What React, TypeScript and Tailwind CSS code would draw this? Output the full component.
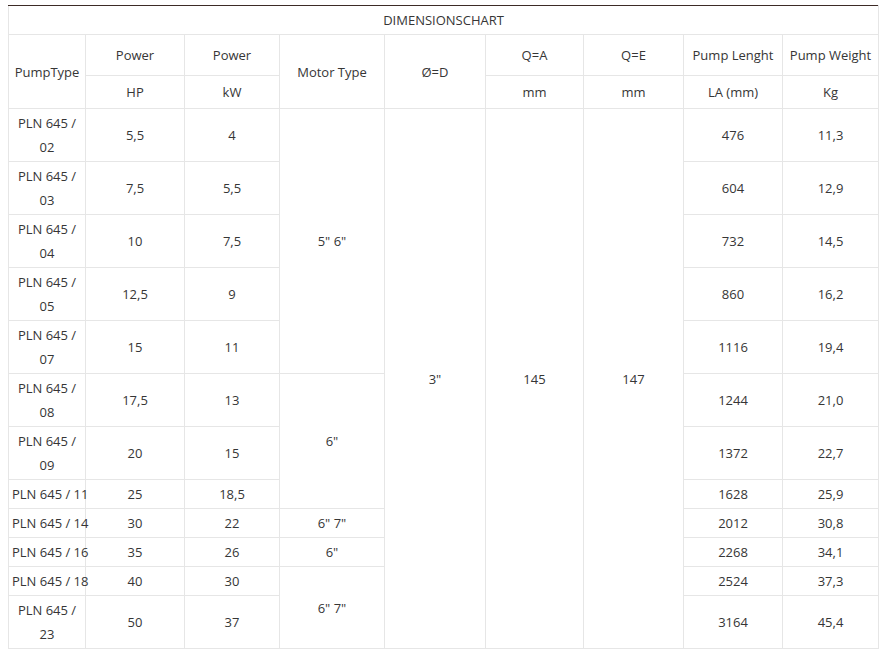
import React from 'react';

type Row = {
    code: string;
    wrap: boolean;
    hp: string;
    kw: string;
    length: string;
    weight: string;
};

const ROWS: Row[] = [
    { code: '02', wrap: true, hp: '5,5', kw: '4', length: '476', weight: '11,3' },
    { code: '03', wrap: true, hp: '7,5', kw: '5,5', length: '604', weight: '12,9' },
    { code: '04', wrap: true, hp: '10', kw: '7,5', length: '732', weight: '14,5' },
    { code: '05', wrap: true, hp: '12,5', kw: '9', length: '860', weight: '16,2' },
    { code: '07', wrap: true, hp: '15', kw: '11', length: '1116', weight: '19,4' },
    { code: '08', wrap: true, hp: '17,5', kw: '13', length: '1244', weight: '21,0' },
    { code: '09', wrap: true, hp: '20', kw: '15', length: '1372', weight: '22,7' },
    { code: '11', wrap: false, hp: '25', kw: '18,5', length: '1628', weight: '25,9' },
    { code: '14', wrap: false, hp: '30', kw: '22', length: '2012', weight: '30,8' },
    { code: '16', wrap: false, hp: '35', kw: '26', length: '2268', weight: '34,1' },
    { code: '18', wrap: false, hp: '40', kw: '30', length: '2524', weight: '37,3' },
    { code: '23', wrap: true, hp: '50', kw: '37', length: '3164', weight: '45,4' },
];

// motor type cells keyed by the row they start on
const MOTOR: Record<number, { label: string; span: number }> = {
    0: { label: '5" 6"', span: 5 },
    5: { label: '6"', span: 3 },
    8: { label: '6" 7"', span: 1 },
    9: { label: '6"', span: 1 },
    10: { label: '6" 7"', span: 2 },
};

const base = 'border border-[#e6e6e6] text-center align-middle font-normal px-[3px]';
const cell = `${base} py-[2px]`;
const headTop = `${base} py-2`;
const headSub = `${base} py-1`;

export default function App() {
    return (
        <div
            className="bg-white min-h-[657px] pl-2 pt-[5px] text-[13px] leading-6 text-[#363636]"
            style={{ fontFamily: '"Open Sans", "Liberation Sans", sans-serif' }}
        >
            <table className="table-fixed border-collapse w-[870px]">
                <colgroup>
                    <col className="w-[77px]" />
                    <col className="w-[99px]" />
                    <col className="w-[95px]" />
                    <col className="w-[105px]" />
                    <col className="w-[101px]" />
                    <col className="w-[98px]" />
                    <col className="w-[100px]" />
                    <col className="w-[99px]" />
                    <col className="w-[96px]" />
                </colgroup>
                <thead>
                    <tr>
                        <th colSpan={9} className={`${cell} border-t-[#3d2b26]`}>
                            DIMENSIONSCHART
                        </th>
                    </tr>
                    <tr>
                        <th rowSpan={2} className={cell}>PumpType</th>
                        <th className={headTop}>Power</th>
                        <th className={headTop}>Power</th>
                        <th rowSpan={2} className={cell}>Motor Type</th>
                        <th rowSpan={2} className={cell}>Ø=D</th>
                        <th className={headTop}>Q=A</th>
                        <th className={headTop}>Q=E</th>
                        <th className={headTop}>Pump Lenght</th>
                        <th className={headTop}>Pump Weight</th>
                    </tr>
                    <tr>
                        <th className={headSub}>HP</th>
                        <th className={headSub}>kW</th>
                        <th className={headSub}>mm</th>
                        <th className={headSub}>mm</th>
                        <th className={headSub}>LA (mm)</th>
                        <th className={headSub}>Kg</th>
                    </tr>
                </thead>
                <tbody>
                    {ROWS.map((r, i) => (
                        <tr key={r.code}>
                            <td className={`${cell} whitespace-nowrap`}>
                                {r.wrap ? (
                                    <>
                                        PLN 645 /<br />
                                        {r.code}
                                    </>
                                ) : (
                                    `PLN 645 / ${r.code}`
                                )}
                            </td>
                            <td className={cell}>{r.hp}</td>
                            <td className={cell}>{r.kw}</td>
                            {MOTOR[i] && (
                                <td rowSpan={MOTOR[i].span} className={cell}>
                                    {MOTOR[i].label}
                                </td>
                            )}
                            {i === 0 && (
                                <>
                                    <td rowSpan={ROWS.length} className={cell}>3"</td>
                                    <td rowSpan={ROWS.length} className={cell}>145</td>
                                    <td rowSpan={ROWS.length} className={cell}>147</td>
                                </>
                            )}
                            <td className={cell}>{r.length}</td>
                            <td className={cell}>{r.weight}</td>
                        </tr>
                    ))}
                </tbody>
            </table>
        </div>
    );
}
